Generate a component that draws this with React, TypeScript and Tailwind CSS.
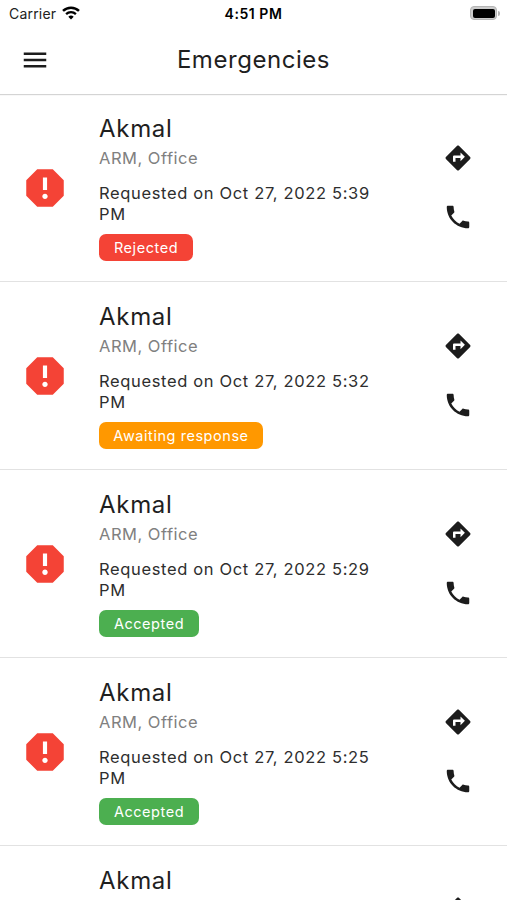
type Status = "rejected" | "awaiting" | "accepted";

interface Emergency {
  id: number;
  name: string;
  place: string;
  requestedOn: string;
  status: Status;
}

const emergencies: Emergency[] = [
  { id: 1, name: "Akmal", place: "ARM, Office", requestedOn: "Oct 27, 2022 5:39 PM", status: "rejected" },
  { id: 2, name: "Akmal", place: "ARM, Office", requestedOn: "Oct 27, 2022 5:32 PM", status: "awaiting" },
  { id: 3, name: "Akmal", place: "ARM, Office", requestedOn: "Oct 27, 2022 5:29 PM", status: "accepted" },
  { id: 4, name: "Akmal", place: "ARM, Office", requestedOn: "Oct 27, 2022 5:25 PM", status: "accepted" },
  { id: 5, name: "Akmal", place: "ARM, Office", requestedOn: "Oct 27, 2022 5:21 PM", status: "accepted" },
];

const badges: Record<Status, { label: string; className: string }> = {
  rejected: { label: "Rejected", className: "w-[94px] bg-[#f44336]" },
  awaiting: { label: "Awaiting response", className: "w-[164px] bg-[#ff9800]" },
  accepted: { label: "Accepted", className: "w-[100px] bg-[#4caf50]" },
};

type IconProps = {
  path: string;
  className: string;
};

function Icon({ path, className }: IconProps) {
  return (
    <svg viewBox="0 0 24 24" fill="currentColor" className={className}>
      <path d={path} />
    </svg>
  );
}

const MENU = "M3 18h18v-2H3v2zm0-5h18v-2H3v2zm0-7v2h18V6H3z";
const REPORT =
  "M15.73 3H8.27L3 8.27v7.46L8.27 21h7.46L21 15.73V8.27L15.73 3zM12 17.3c-.72 0-1.3-.58-1.3-1.3 0-.72.58-1.3 1.3-1.3.72 0 1.3.58 1.3 1.3 0 .72-.58 1.3-1.3 1.3zm1-4.3h-2V7h2v6z";
const DIRECTIONS =
  "M21.71 11.29l-9-9c-.39-.39-1.02-.39-1.41 0l-9 9c-.39.39-.39 1.02 0 1.41l9 9c.39.39 1.02.39 1.41 0l9-9c.39-.38.39-1.01 0-1.41zM14 14.5V12h-4v3H8v-4c0-.55.45-1 1-1h5V7.5l3.5 3.5-3.5 3.5z";
const PHONE =
  "M6.62 10.79c1.44 2.83 3.76 5.14 6.59 6.59l2.2-2.2c.27-.27.67-.36 1.02-.24 1.12.37 2.33.57 3.57.57.55 0 1 .45 1 1V20c0 .55-.45 1-1 1-9.39 0-17-7.61-17-17 0-.55.45-1 1-1h3.5c.55 0 1 .45 1 1 0 1.25.2 2.45.57 3.57.11.35.03.74-.25 1.02l-2.2 2.2z";

function StatusBar() {
  return (
    <div className="grid h-7 grid-cols-3 items-center text-black">
      <div className="flex items-center gap-1.5 pl-[9px]">
        <span className="text-[14px] leading-5 tracking-[0.2px] text-[#222]">Carrier</span>
        <svg viewBox="0 0 18 14" className="mb-0.5 h-3.5 w-[18px]" fill="none" stroke="currentColor">
          <path d="M1 4.9a11.5 11.5 0 0 1 16 0" strokeWidth="2.5" />
          <path d="M4.1 8.1a7.1 7.1 0 0 1 9.8 0" strokeWidth="2.3" />
          <path d="M9 13.6L6.3 10.8a3.9 3.9 0 0 1 5.4 0z" fill="currentColor" stroke="none" />
        </svg>
      </div>
      <span className="text-center text-[14px] leading-5 font-semibold tracking-[0.55px]">4:51 PM</span>
      <div className="flex items-center justify-end pr-[7px] pb-0.5">
        <div className="h-[14px] w-[27px] rounded-[4px] border border-[#b5b5b5] bg-[#ccc] p-[1.5px]">
          <div className="h-full rounded-[2px] bg-black" />
        </div>
        <div className="ml-px h-[5px] w-0.5 rounded-r-full bg-[#b5b5b5]" />
      </div>
    </div>
  );
}

function EmergencyRow({ emergency }: { emergency: Emergency }) {
  const badge = badges[emergency.status];

  return (
    <li className="flex h-[188px] shrink-0 border-b border-[#e2e2e2]">
      <div className="flex w-[99px] items-center pl-5">
        <Icon path={REPORT} className="size-[50px] text-[#f44336]" />
      </div>
      <div className="w-[290px] pt-[19px]">
        <h2 className="text-[24px] leading-8 tracking-[0.7px] text-[#1f1f1f]">{emergency.name}</h2>
        <p className="mt-px text-[16.5px] leading-6 tracking-[0.5px] text-[#808080]">{emergency.place}</p>
        <p className="mt-[13px] text-[16.5px] leading-[21px] tracking-[0.65px] text-[#2e2e2e]">
          {`Requested on ${emergency.requestedOn}`}
        </p>
        <span
          className={`mt-[9px] flex h-[27px] items-center justify-center rounded-[7px] text-[14.5px] tracking-[0.55px] text-white ${badge.className}`}
        >
          {badge.label}
        </span>
      </div>
      <div className="flex flex-col gap-[29px] pt-[49px] pl-[54px] text-[#1c1c1c]">
        <Icon path={DIRECTIONS} className="size-[30px]" />
        <Icon path={PHONE} className="size-[30px]" />
      </div>
    </li>
  );
}

export default function App() {
  return (
    <div className="flex h-screen flex-col overflow-hidden bg-white font-['Inter',sans-serif]">
      <header className="h-[94px] shrink-0 shadow-[0_1px_1px_#d4d4d4]">
        <StatusBar />
        <div className="grid h-16 grid-cols-[70px_1fr_70px] items-center">
          <Icon path={MENU} className="ml-5 size-[30px] text-[#1c1c1c]" />
          <h1 className="text-center text-[24px] leading-8 tracking-[0.55px] text-[#1f1f1f]">Emergencies</h1>
        </div>
      </header>
      <ul className="flex flex-col">
        {emergencies.map((emergency) => (
          <EmergencyRow key={emergency.id} emergency={emergency} />
        ))}
      </ul>
    </div>
  );
}
